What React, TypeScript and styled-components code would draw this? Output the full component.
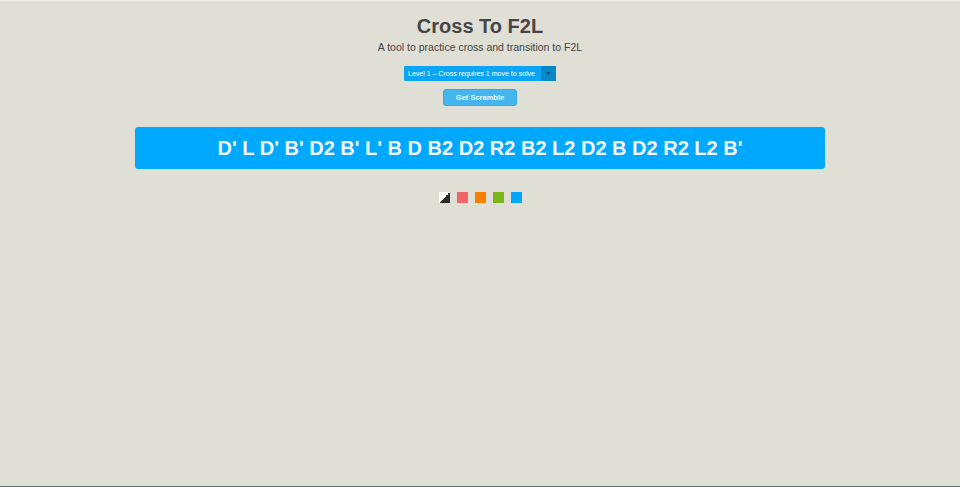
import React from "react";
import styled, { createGlobalStyle } from "styled-components";

const Global = createGlobalStyle`
  html, body { margin: 0; padding: 0; background: #dfdfd5; }
  body { font-family: "Liberation Sans", Arial, sans-serif; }
`;

const Page = styled.div`
  min-height: 487px;
  box-sizing: border-box;
  border-top: 1px solid #ecece6;
  border-bottom: 1px solid #5d6d72;
  display: flex;
  flex-direction: column;
  align-items: center;
  color: #444;
`;

const Title = styled.h1`
  margin: 13px 0 0;
  font-size: 20px;
  line-height: 24px;
  font-weight: bold;
  color: #464646;
`;

const Subtitle = styled.p`
  margin: 2px 0 0;
  font-size: 10.5px;
  line-height: 14px;
  color: #444;
`;

const SelectBox = styled.div`
  margin-top: 12px;
  width: 152px;
  height: 15px;
  display: flex;
  background: #0aa6f5;
  border-radius: 1px;
  color: #fff;
  font-size: 7px;
  line-height: 15px;
`;

const SelectLabel = styled.span`
  flex: 1;
  padding-left: 4px;
  white-space: nowrap;
  overflow: hidden;
`;

const SelectArrow = styled.span`
  width: 15px;
  background: #0688c9;
  display: flex;
  align-items: center;
  justify-content: center;
  color: #1b2b3a;
  font-size: 5px;
`;

const ScrambleButton = styled.button`
  margin-top: 8px;
  width: 74px;
  height: 17px;
  padding: 0;
  background: #45b5ef;
  border: 1px solid #36a8e6;
  border-radius: 3px;
  color: #eef8ff;
  font-family: "Liberation Sans", Arial, sans-serif;
  font-size: 7.5px;
  font-weight: bold;
`;

const ScrambleBar = styled.div`
  margin-top: 21px;
  width: 690px;
  height: 42px;
  box-sizing: border-box;
  background: #00a8fe;
  border-radius: 3px;
  display: flex;
  align-items: center;
  justify-content: center;
  color: #f2f7fb;
  font-size: 20px;
  font-weight: bold;
`;

const Swatches = styled.div`
  margin-top: 23px;
  display: flex;
  gap: 7px;
`;

const Swatch = styled.div<{ $color: string }>`
  width: 11px;
  height: 11px;
  background: ${(p) => p.$color};
`;

const colors = [
  "linear-gradient(to bottom right, #ffffff 50%, #2b2b2b 50%)",
  "#f26566",
  "#f77f00",
  "#7cb518",
  "#00a6ff",
];

export default function App() {
  return (
    <>
      <Global />
      <Page>
        <Title>Cross To F2L</Title>
        <Subtitle>A tool to practice cross and transition to F2L</Subtitle>
        <SelectBox>
          <SelectLabel>Level 1 – Cross requires 1 move to solve</SelectLabel>
          <SelectArrow>▼</SelectArrow>
        </SelectBox>
        <ScrambleButton>Get Scramble</ScrambleButton>
        <ScrambleBar>D' L D' B' D2 B' L' B D B2 D2 R2 B2 L2 D2 B D2 R2 L2 B'</ScrambleBar>
        <Swatches>
          {colors.map((c, i) => (
            <Swatch key={i} $color={c} />
          ))}
        </Swatches>
      </Page>
    </>
  );
}
